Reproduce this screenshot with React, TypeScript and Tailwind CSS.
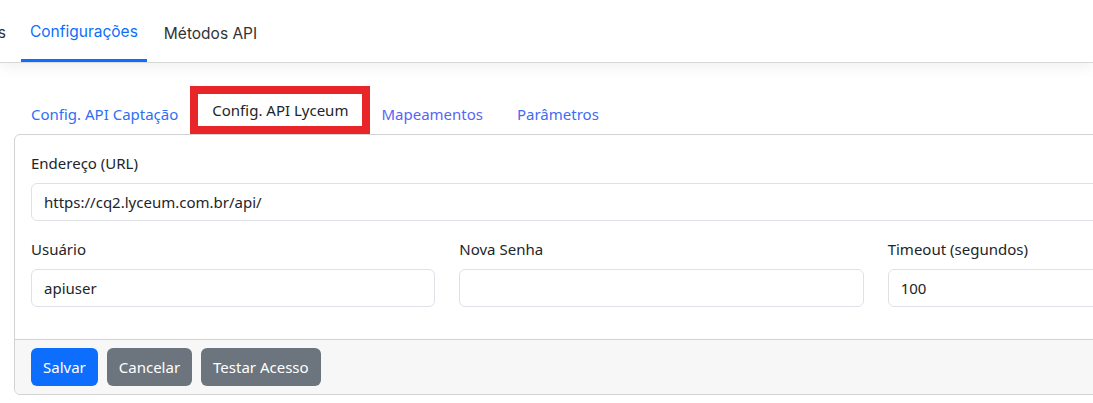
import React from "react";

const segoe = "font-['Noto_Sans',_'Liberation_Sans',_sans-serif]";

function TopNav() {
  return (
    <div className="relative z-10 h-[63px] bg-white border-b border-[#d9d9d9] shadow-[0_3px_14px_rgba(0,0,0,0.07)] font-['Inter',_sans-serif] text-[15.5px]">
      <div className="flex h-full items-stretch gap-[8px]">
        <div className="flex w-[13px] justify-end overflow-hidden">
          <a className="flex items-center whitespace-nowrap pr-[7px] pt-[3px] text-[#333]">Integrações</a>
        </div>
        <a className="flex items-center border-b-[3px] border-[#0d6efd] px-[9px] pt-[5px] text-[#0d6efd]">
          Configurações
        </a>
        <a className="flex items-center px-[9px] pt-[5px] text-[#333]">Métodos API</a>
      </div>
    </div>
  );
}

function Field({ label, value }: { label: string; value: string }) {
  return (
    <div>
      <label className="mb-[8px] block leading-[24px] text-[#212529]">{label}</label>
      <div className="flex h-[38px] items-center rounded-[6px] border border-[#dee2e6] bg-white px-[12px] text-[#212529]">
        {value}
      </div>
    </div>
  );
}

export default function App() {
  const tabs = [
    { label: "Config. API Captação", color: "text-[#2f6ff5]", pad: "pl-[16px] pr-[12px]" },
    { label: "Config. API Lyceum", active: true, pad: "" },
    { label: "Mapeamentos", color: "text-[#5865f2]", pad: "pl-[11px] pr-[17px]" },
    { label: "Parâmetros", color: "text-[#3f6bf3]", pad: "pl-[17px] pr-[16px]" },
  ];

  return (
    <div className={`h-[403px] w-[1093px] overflow-hidden bg-white ${segoe} text-[15px]`}>
      <TopNav />
      <div className="w-[1330px] pl-[14px] pt-[31px]">
        <div className="flex h-[40px] items-stretch pl-[1px]">
          {tabs.map((t) =>
            t.active ? (
              <div key={t.label} className="-mt-[8px] flex border-[8px] border-[#e8262a] bg-white">
                <span className="flex items-center px-[14px] text-[#212529]">{t.label}</span>
              </div>
            ) : (
              <a key={t.label} className={`flex items-center ${t.pad} ${t.color}`}>
                {t.label}
              </a>
            )
          )}
        </div>
        <div className="w-[1295px] rounded-[6px] border border-[#d3d3d3]">
          <div className="px-[16px] pt-[16px] pb-[16px]">
            <div className="mb-[16px]">
              <Field label="Endereço (URL)" value="https://cq2.lyceum.com.br/api/" />
            </div>
            <div className="mb-[16px] grid grid-cols-3 gap-[24px]">
              <Field label="Usuário" value="apiuser" />
              <Field label="Nova Senha" value="" />
              <Field label="Timeout (segundos)" value="100" />
            </div>
          </div>
          <div className="flex gap-[9px] rounded-b-[6px] border-t border-[#d3d3d3] bg-[#f7f7f7] px-[16px] py-[8px]">
            <button className="h-[38px] rounded-[6px] bg-[#0d6efd] px-[12px] text-white">Salvar</button>
            <button className="h-[38px] rounded-[6px] bg-[#6c757d] px-[12px] text-white">Cancelar</button>
            <button className="h-[38px] rounded-[6px] bg-[#6c757d] px-[12px] text-white">Testar Acesso</button>
          </div>
        </div>
      </div>
    </div>
  );
}
